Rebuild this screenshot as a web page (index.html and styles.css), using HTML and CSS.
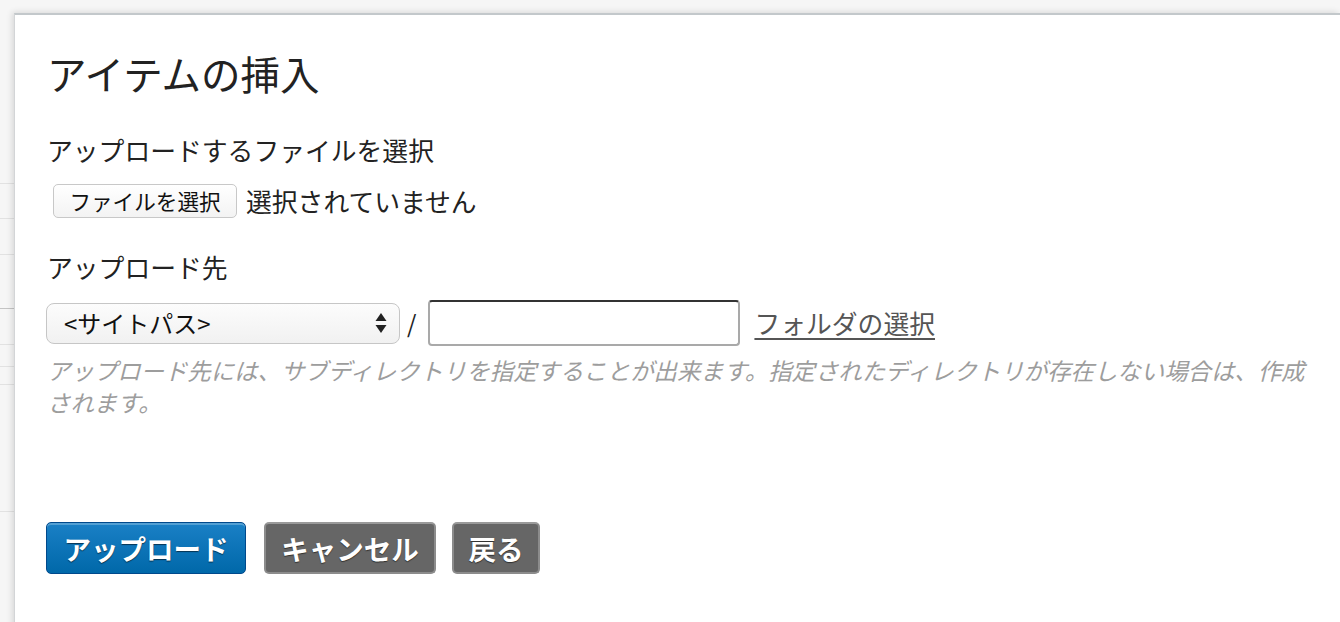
FILE: index.html
```html
<!DOCTYPE html>
<html lang="ja">
<head>
<meta charset="utf-8">
<title>アイテムの挿入</title>
<link rel="stylesheet" href="styles.css">
</head>
<body>
<div class="backdrop">
  <div class="bg-row r1"></div>
  <div class="bg-row r2"></div>
  <div class="bg-row r3"></div>
  <div class="bg-row r4 dark"></div>
  <div class="bg-row r5"></div>
  <div class="bg-row r6"></div>
  <div class="bg-row r7"></div>
  <div class="bg-row r8"></div>
</div>
<div class="dialog">
  <h1 class="title">アイテムの挿入</h1>
  <div class="label first">アップロードするファイルを選択</div>
  <div class="file-row">
    <button class="file-btn" type="button">ファイルを選択</button>
    <span class="file-status">選択されていません</span>
  </div>
  <div class="label second">アップロード先</div>
  <div class="dest-row">
    <div class="select">
      <span class="select-text">&lt;サイトパス&gt;</span>
      <svg class="select-arrows" width="12" height="22" viewBox="0 0 12 22"><path d="M6 1 L11.5 9 H0.5 Z M6 21 L11.5 13 H0.5 Z" fill="#222"/></svg>
    </div>
    <span class="slash">/</span>
    <div class="text-input"></div>
    <a class="folder-link" href="#">フォルダの選択</a>
  </div>
  <p class="help">アップロード先には、サブディレクトリを指定することが出来ます。指定されたディレクトリが存在しない場合は、作成されます。</p>
  <div class="actions">
    <button class="btn primary" type="button">アップロード</button>
    <button class="btn gray cancel" type="button">キャンセル</button>
    <button class="btn gray back" type="button">戻る</button>
  </div>
</div>
</body>
</html>
```

FILE: styles.css
```css
* { box-sizing: border-box; }
html, body {
  margin: 0;
  height: 100%;
}
body {
  background: #f6f6f6;
  font-family: "Noto Sans CJK JP", "Noto Sans", sans-serif;
  color: #222;
  overflow: hidden;
  position: relative;
}
.backdrop {
  padding-top: 183px;
  width: 40px;
}
.bg-row { border-top: 1px solid #e2e2e2; }
.bg-row.dark { border-top-color: #c4c4c4; }
.r1 { height: 35px; }
.r2 { height: 36px; }
.r3 { height: 54px; }
.r4 { height: 36px; }
.r5 { height: 22px; }
.r6 { height: 18px; }
.r7 { height: 127px; }
.r8 { height: 60px; }

.dialog {
  position: absolute;
  left: 14px;
  top: 13px;
  right: 0;
  bottom: -20px;
  background: #fff;
  border-top: 2px solid #c3c8cb;
  border-left: 1px solid #d3d5d7;
  box-shadow: -2px -1px 6px rgba(0, 0, 0, 0.12);
  padding: 34px 14px 0 32px;
}
.title {
  margin: 0;
  font-size: 39.5px;
  line-height: 48px;
  font-weight: 400;
  color: #222;
}
.label {
  font-size: 25.8px;
  line-height: 32px;
  color: #222;
}
.label.first { margin-top: 37px; }
.label.second { margin-top: 33px; }

.file-row {
  margin-top: 18px;
  height: 34px;
  display: flex;
  align-items: center;
  gap: 9px;
}
.file-btn {
  margin-left: 6px;
  height: 34px;
  width: 184px;
  padding: 0;
  font-family: inherit;
  font-size: 21.6px;
  line-height: 32px;
  color: #111;
  background: linear-gradient(#ffffff, #f3f3f3);
  border: 1px solid #c8c8c8;
  border-radius: 5px;
}
.file-status {
  font-size: 25.8px;
  line-height: 32px;
  color: #222;
}

.dest-row {
  margin-top: 17px;
  height: 46px;
  display: flex;
  align-items: center;
}
.select {
  width: 354px;
  height: 41px;
  margin-left: -1px;
  border: 1px solid #c6c6c6;
  border-radius: 8px;
  background: linear-gradient(#fcfcfc, #f1f1f1);
  display: flex;
  align-items: center;
  justify-content: space-between;
  padding: 0 12px 0 17px;
}
.select-text {
  font-size: 24px;
  line-height: 30px;
  color: #111;
}
.select-arrows { display: block; }
.slash {
  font-size: 24px;
  line-height: 30px;
  margin: 0 12px 0 7px;
  color: #222;
}
.text-input {
  width: 312px;
  height: 46px;
  border: 2px solid #a9a9a9;
  border-top-color: #333;
  border-radius: 4px;
  background: #fff;
}
.folder-link {
  margin-left: 14px;
  font-size: 25.8px;
  line-height: 32px;
  color: #555;
  text-decoration: underline;
  text-underline-offset: 4px;
  text-decoration-thickness: 2px;
}

.help {
  margin: 8px 0 0 0;
  font-size: 23.4px;
  line-height: 32px;
  font-style: italic;
  color: #9d9d9d;
}

.actions {
  margin-top: 104px;
  display: flex;
  gap: 18px;
}
.btn {
  height: 52px;
  padding: 0;
  margin: 0;
  font-family: inherit;
  font-size: 27.5px;
  font-weight: 700;
  line-height: 46px;
  white-space: nowrap;
  text-align: center;
  color: #fff;
  border-radius: 5px;
  text-shadow: 0 1px 1px rgba(0, 0, 0, 0.55);
}
.btn.primary {
  width: 200px;
  margin-left: -1px;
  background: linear-gradient(#1a80c6, #0068a9);
  border: 1px solid #00498c;
  box-shadow: inset 0 2px 0 rgba(255, 255, 255, 0.25);
}
.btn.gray {
  background: #666;
  border: 2px solid #8c8c8c;
  border-top-color: #9a9a9a;
}
.btn.cancel { width: 172px; }
.btn.back { width: 88px; margin-left: -2px; }
```
